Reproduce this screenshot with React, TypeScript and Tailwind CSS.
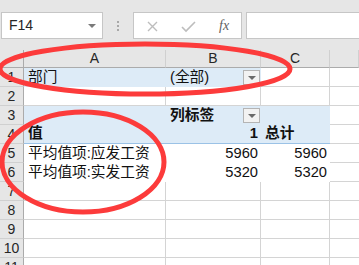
import React from "react";

const font = { fontFamily: '"Liberation Sans", "Noto Sans CJK SC", sans-serif' };

type Cell = {
  text?: string;
  align?: "left" | "right";
  bold?: boolean;
  blue?: boolean;
  drop?: boolean;
  noGrid?: boolean;
  pivotLine?: boolean;
};

const rows: Cell[][] = [
  [{ text: "部门", blue: true }, { text: "(全部)", blue: true, drop: true }, {}, {}],
  [{}, {}, {}, {}],
  [{ blue: true }, { text: "列标签", blue: true, bold: true, drop: true }, { blue: true }, {}],
  [
    { text: "值", blue: true, bold: true, pivotLine: true },
    { text: "1", blue: true, bold: true, align: "right", pivotLine: true },
    { text: "总计", blue: true, bold: true, pivotLine: true },
    {},
  ],
  [
    { text: "平均值项:应发工资", noGrid: true },
    { text: "5960", align: "right", noGrid: true },
    { text: "5960", align: "right", noGrid: true },
    {},
  ],
  [
    { text: "平均值项:实发工资", noGrid: true },
    { text: "5320", align: "right", noGrid: true },
    { text: "5320", align: "right", noGrid: true },
    {},
  ],
  [{}, {}, {}, {}],
  [{}, {}, {}, {}],
  [{}, {}, {}, {}],
  [{}, {}, {}, {}],
  [{}, {}, {}, {}],
];

const DropButton = () => (
  <div className="absolute right-[1px] bottom-[2px] w-[17px] h-[15px] bg-[#f2f2f2] border border-[#b4b4b4] flex items-center justify-center">
    <div className="w-0 h-0 border-l-[4px] border-r-[4px] border-t-[4px] border-l-transparent border-r-transparent border-t-[#6a6a6a]" />
  </div>
);

const SheetCell = ({ c, last }: { c: Cell; last?: boolean }) => {
  let cls = "relative h-[19px] flex items-end overflow-visible whitespace-nowrap leading-none pb-[2px] ";
  if (c.blue) cls += "bg-[#ddebf7] ";
  else cls += "bg-white ";
  if (c.pivotLine) cls += "border-b border-[#9bc2e6] ";
  else if (c.blue || c.noGrid) cls += "";
  else cls += "border-b border-r border-[#d4d4d4] ";
  if (last && !c.blue) cls += "border-r-0 ";
  cls += c.align === "right" ? "justify-end pr-[3px] " : "pl-[4px] ";
  cls += c.bold ? "font-bold " : "";
  return (
    <div className={cls}>
      {c.text && <span className="text-[14.7px] text-[#111]">{c.text}</span>}
      {c.drop && <DropButton />}
    </div>
  );
};

export default function App() {
  return (
    <div className="relative w-[359px] h-[265px] overflow-hidden bg-white" style={font}>
      {/* formula bar */}
      <div className="h-[50px] bg-[#e6e6e6] flex items-start pt-[12px] pl-[1px]">
        <div className="w-[102px] h-[27px] bg-white border border-[#c6c6c6] flex items-center pl-[7px] pr-[6px]">
          <span className="text-[14px] text-[#262626] flex-1">F14</span>
          <div className="w-0 h-0 border-l-[4px] border-r-[4px] border-t-[4px] border-l-transparent border-r-transparent border-t-[#7a7a7a]" />
        </div>
        <div className="w-[30px] h-[27px] flex flex-col items-center justify-center gap-[2px]">
          <div className="w-[2px] h-[2px] bg-[#a8a8a8]" />
          <div className="w-[2px] h-[2px] bg-[#a8a8a8]" />
          <div className="w-[2px] h-[2px] bg-[#a8a8a8]" />
        </div>
        <div className="w-[109px] h-[27px] bg-white border border-[#c6c6c6] flex items-center">
          <svg width="36" height="25" viewBox="0 0 36 25">
            <path d="M14 9 L23 18 M23 9 L14 18" stroke="#bdbdbd" strokeWidth="1.4" fill="none" />
          </svg>
          <svg width="36" height="25" viewBox="0 0 36 25">
            <path d="M12 14 L16 18 L25 9" stroke="#bdbdbd" strokeWidth="1.6" fill="none" />
          </svg>
          <span className="ml-[13px] text-[14px] italic text-[#5f5f5f]" style={{ fontFamily: '"Liberation Serif", serif' }}>
            fx
          </span>
        </div>
        <div className="ml-[4px] flex-1 h-[27px] bg-white border border-[#c6c6c6] border-r-0" />
      </div>

      {/* grid */}
      <div className="grid grid-cols-[24px_142px_95px_69px_1fr]">
        <div className="h-[18px] bg-[#e6e6e6] border-b border-r border-[#ababab]" />
        {["A", "B", "C", ""].map((l, i) => (
          <div
            key={i}
            className="h-[18px] bg-[#e6e6e6] border-b border-r border-b-[#ababab] border-r-[#d0d0d0] flex items-center justify-center text-[14px] text-[#262626]"
          >
            {l}
          </div>
        ))}
        {rows.map((r, ri) => (
          <React.Fragment key={ri}>
            <div className="h-[19px] bg-[#e6e6e6] border-b border-r border-b-[#d0d0d0] border-r-[#ababab] flex items-center justify-center text-[14px] text-[#262626]">
              {ri + 1}
            </div>
            {r.map((c, ci) => (
              <SheetCell key={ci} c={c} last={ci === 3} />
            ))}
          </React.Fragment>
        ))}
      </div>

      {/* red marks */}
      <svg className="absolute left-0 top-0 pointer-events-none" width="359" height="265">
        <ellipse cx="145" cy="69" rx="145" ry="25" stroke="#fc3b3b" strokeWidth="5" fill="none" />
        <ellipse cx="83" cy="162" rx="81" ry="50" stroke="#fc3b3b" strokeWidth="5" fill="none" />
      </svg>
    </div>
  );
}
